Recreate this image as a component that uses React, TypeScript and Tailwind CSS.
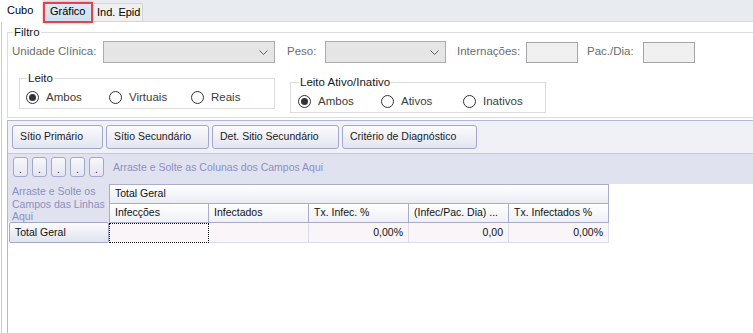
import React from "react";

function Chevron() {
  return (
    <svg width="9" height="5" viewBox="0 0 9 5" className="block">
      <path d="M0.5 0.5 L4.5 4.5 L8.5 0.5" fill="none" stroke="#606060" strokeWidth="1" />
    </svg>
  );
}

function Select({ w }: { w: string }) {
  return (
    <div className={`${w} h-[22px] bg-[#e5e5e5] border border-[#adadad] flex items-center justify-end pr-[6px]`}>
      <Chevron />
    </div>
  );
}

function Radio({ label, checked, width }: { label: string; checked?: boolean; width: string }) {
  return (
    <div className={`${width} flex items-center h-[13px] shrink-0`}>
      <div className="w-[13px] h-[13px] rounded-full border border-[#333333] flex items-center justify-center bg-white shrink-0">
        {checked ? <div className="w-[7px] h-[7px] rounded-full bg-[#333333]" /> : null}
      </div>
      <span className="ml-[7px] text-[#3c3c3c] leading-[13px] whitespace-nowrap">{label}</span>
    </div>
  );
}

function PivotButton({ label, w }: { label: string; w: string }) {
  return (
    <div
      className={`${w} h-[24px] rounded-[3px] border border-[#a4a8c8] bg-gradient-to-b from-[#fbfbfd] to-[#e3e5f0] pl-[7px] flex items-center text-[#1b1b1b] whitespace-nowrap`}
    >
      {label}
    </div>
  );
}

function DotButton() {
  return (
    <div className="w-[15px] h-[20px] rounded-[3px] border border-[#a4a8c8] bg-gradient-to-b from-[#f7f7fb] to-[#e4e5f0] flex items-end justify-center leading-[14px] text-[#5a1010]">
      .
    </div>
  );
}

export default function App() {
  const cols = ["Infecções", "Infectados", "Tx. Infec. %", "(Infec/Pac. Dia) ...", "Tx. Infectados %"];
  const vals = ["", "", "0,00%", "0,00", "0,00%"];
  return (
    <div className="w-[753px] h-[333px] overflow-hidden bg-white font-['Liberation_Sans',Arial,sans-serif] text-[11.5px] text-black flex flex-col">
      {/* Tabs */}
      <div className="h-[22px] flex shrink-0 bg-[#e8ebf0] text-[11px]">
        <div className="w-[43px] h-[22px] bg-white pl-[7px] pt-[3px] leading-[14px] whitespace-nowrap">Cubo</div>
        <div className="mt-[2px] h-[21px] w-[50px] border-2 border-[#e3434b] bg-gradient-to-b from-[#dde9f5] to-[#cfe0f1] pl-[5px] leading-[15px] whitespace-nowrap shadow-[0_0_2px_rgba(227,67,75,0.6)]">
          Gráfico
        </div>
        <div className="mt-[3px] h-[19px] w-[50px] bg-[#f0f0f0] border border-[#d5d5d5] pl-[3px] leading-[16px] whitespace-nowrap">
          Ind. Epid
        </div>
        <div className="flex-1 border-b border-[#d9d9d9]" />
      </div>

      {/* Tab page */}
      <div className="flex-1 ml-[1px] border-l border-[#c8cad8] pt-[3px] flex flex-col">
        <fieldset className="ml-[5px] h-[93px] border border-r-0 border-[#dcdcdc] pl-[4px] shrink-0">
          <legend className="ml-[1px] px-[1px] leading-[14px] text-[#1a1a1a]">Filtro</legend>
          <div className="flex items-center mt-[2px] h-[22px]">
            <span className="w-[91px] text-[#6d6d6d] whitespace-nowrap">Unidade Clínica:</span>
            <Select w="w-[172px]" />
            <span className="ml-[12px] w-[38px] text-[#6d6d6d]">Peso:</span>
            <Select w="w-[121px]" />
            <span className="ml-[11px] w-[69px] text-[#6d6d6d] whitespace-nowrap">Internações:</span>
            <div className="w-[52px] h-[21px] bg-[#f0f0f0] border border-[#a5a5a5]" />
            <span className="ml-[9px] w-[56px] text-[#6d6d6d] whitespace-nowrap">Pac./Dia:</span>
            <div className="w-[52px] h-[21px] bg-[#f0f0f0] border border-[#a5a5a5]" />
          </div>
          <div className="flex items-start mt-[8px]">
            <fieldset className="ml-[7px] w-[256px] h-[38px] border border-[#dcdcdc] pl-[7px]">
              <legend className="px-[1px] leading-[14px] text-[#1a1a1a]">Leito</legend>
              <div className="flex mt-[6px] -ml-[1px]">
                <Radio label="Ambos" checked width="w-[83px]" />
                <Radio label="Virtuais" width="w-[82px]" />
                <Radio label="Reais" width="w-[70px]" />
              </div>
            </fieldset>
            <fieldset className="ml-[15px] mt-[4px] w-[256px] h-[38px] border border-[#dcdcdc] pl-[8px]">
              <legend className="px-[1px] leading-[14px] text-[#1a1a1a]">Leito Ativo/Inativo</legend>
              <div className="flex mt-[6px] -ml-[1px]">
                <Radio label="Ambos" checked width="w-[83px]" />
                <Radio label="Ativos" width="w-[82px]" />
                <Radio label="Inativos" width="w-[70px]" />
              </div>
            </fieldset>
          </div>
        </fieldset>

        {/* Pivot grid */}
        <div className="mt-[2px] ml-[5px] flex-1 border-l border-t border-[#b3b7d6] flex flex-col text-[10.5px]">
          <div className="h-[32px] bg-[#f0f1f7] pl-[4px] pt-[4px] flex gap-[3px] shrink-0">
            <PivotButton label="Sítio Primário" w="w-[91px]" />
            <PivotButton label="Sítio Secundário" w="w-[103px]" />
            <PivotButton label="Det. Sitio Secundário" w="w-[127px]" />
            <PivotButton label="Critério de Diagnóstico" w="w-[135px]" />
          </div>
          <div className="h-[31px] border-t border-[#c5c8de] bg-[#e1e2ef] pl-[5px] pt-[3px] flex items-start shrink-0">
            <div className="flex gap-[4px]">
              <DotButton />
              <DotButton />
              <DotButton />
              <DotButton />
              <DotButton />
            </div>
            <span className="ml-[9px] mt-[3px] text-[#8b8fc2] whitespace-nowrap leading-[14px]">
              Arraste e Solte as Colunas dos Campos Aqui
            </span>
          </div>
          <div className="flex">
            <div className="w-[101px] flex flex-col shrink-0">
              <div className="h-[38px] bg-[#e1e2ef] pl-[4px] text-[#8b8fc2] leading-[12.5px] pt-[1px] whitespace-nowrap overflow-hidden">
                <div>Arraste e Solte os</div>
                <div>Campos das Linhas</div>
                <div>Aqui</div>
              </div>
              <div className="ml-[1px] h-[21px] rounded-[2px] border border-[#a4a8c8] bg-gradient-to-b from-[#fbfbfd] to-[#e1e3ef] pl-[5px] flex items-center text-[#111]">
                Total Geral
              </div>
            </div>
            <div className="w-[500px] flex flex-col">
              <div className="h-[20px] border border-[#a9adcb] bg-gradient-to-b from-white to-[#eaecf4] pl-[5px] flex items-center text-[#111]">
                Total Geral
              </div>
              <div className="flex h-[19px]">
                {cols.map((c, i) => (
                  <div
                    key={c}
                    className={`${i === 0 ? "w-[100px] border-l" : "w-[100px]"} border-r border-b border-[#a9adcb] bg-gradient-to-b from-white to-[#eef0f6] pl-[5px] flex items-center text-[#111] whitespace-nowrap overflow-hidden`}
                  >
                    {c}
                  </div>
                ))}
              </div>
              <div className="flex h-[20px]">
                {vals.map((v, i) => (
                  <div
                    key={i}
                    className={`${i === 0 ? "w-[100px] border border-dotted border-[#111]" : "w-[100px] border-r border-b border-[#dcdcef]"} bg-[#f9f5f9] pr-[5px] flex items-center justify-end text-[#111]`}
                  >
                    {v}
                  </div>
                ))}
              </div>
            </div>
          </div>
        </div>
      </div>
    </div>
  );
}
